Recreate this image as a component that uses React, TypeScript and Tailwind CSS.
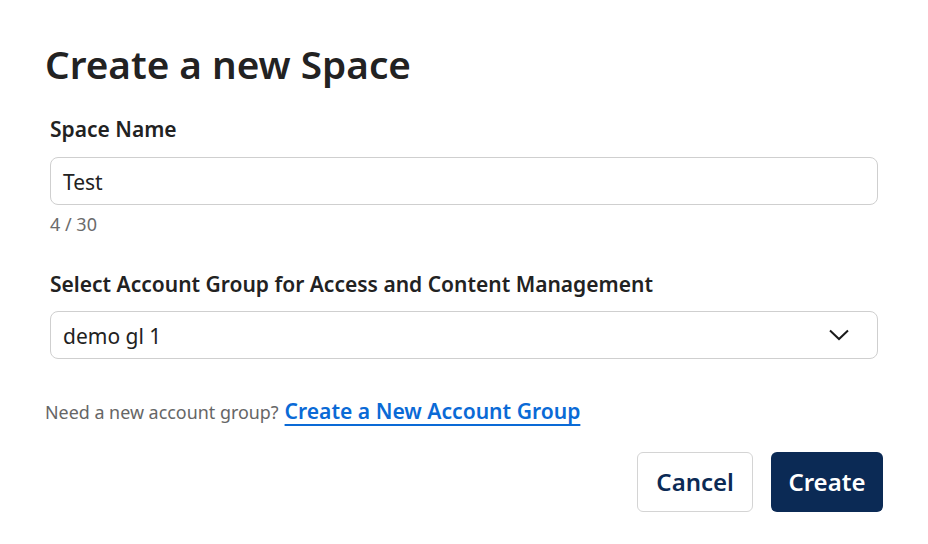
import React from "react";

export default function App() {
  return (
    <div
      className="w-[928px] h-[544px] bg-white text-[#1f1f1f] overflow-hidden"
      style={{ fontFamily: '"Noto Sans", sans-serif' }}
    >
      <div className="pl-[45px] pr-[45px] pt-[38px]">
        <h1 className="text-[38.7px] leading-[52px] font-semibold text-[#222]">Create a new Space</h1>
        <div className="px-[5px] pt-[25px]">
          <label className="block text-[21px] leading-[28px] font-semibold text-[#222]">Space Name</label>
          <div className="mt-[14px] h-[48px] rounded-[8px] border border-[#cfcfcf] flex items-center px-[12px] pt-[3px] text-[21px] text-[#222]">
            Test
          </div>
          <div className="mt-[7px] text-[18px] leading-[24px] text-[#6b6b6b]">4 / 30</div>
          <label className="block mt-[34px] text-[21px] leading-[28px] font-semibold text-[#222]">
            Select Account Group for Access and Content Management
          </label>
          <div className="mt-[13px] h-[48px] rounded-[8px] border border-[#cfcfcf] flex items-center justify-between pl-[12px] pr-[28px] text-[21px] text-[#222]">
            <span className="pt-[3px]">demo gl 1</span>
            <svg width="20" height="12" viewBox="0 0 20 12" fill="none">
              <path d="M1 1.5 L10 10 L19 1.5" stroke="#1a1a1a" strokeWidth="2" />
            </svg>
          </div>
        </div>
        <div className="mt-[38px] h-[28px] flex items-baseline gap-[6px]">
          <span className="text-[17.9px] leading-[28px] text-[#666]">Need a new account group?</span>
          <a className="text-[21.1px] leading-[28px] font-semibold text-[#0a6ad6] underline decoration-2 underline-offset-[5px]">
            Create a New Account Group
          </a>
        </div>
        <div className="mt-[27px] flex justify-end gap-[18px]">
          <button className="h-[60px] px-[18px] rounded-[6px] border border-[#d4d4d4] bg-white text-[24px] font-semibold text-[#0b2a55]">
            Cancel
          </button>
          <button className="h-[60px] px-[17.5px] rounded-[6px] bg-[#0b2a55] text-[24px] font-semibold text-white">
            Create
          </button>
        </div>
      </div>
    </div>
  );
}
